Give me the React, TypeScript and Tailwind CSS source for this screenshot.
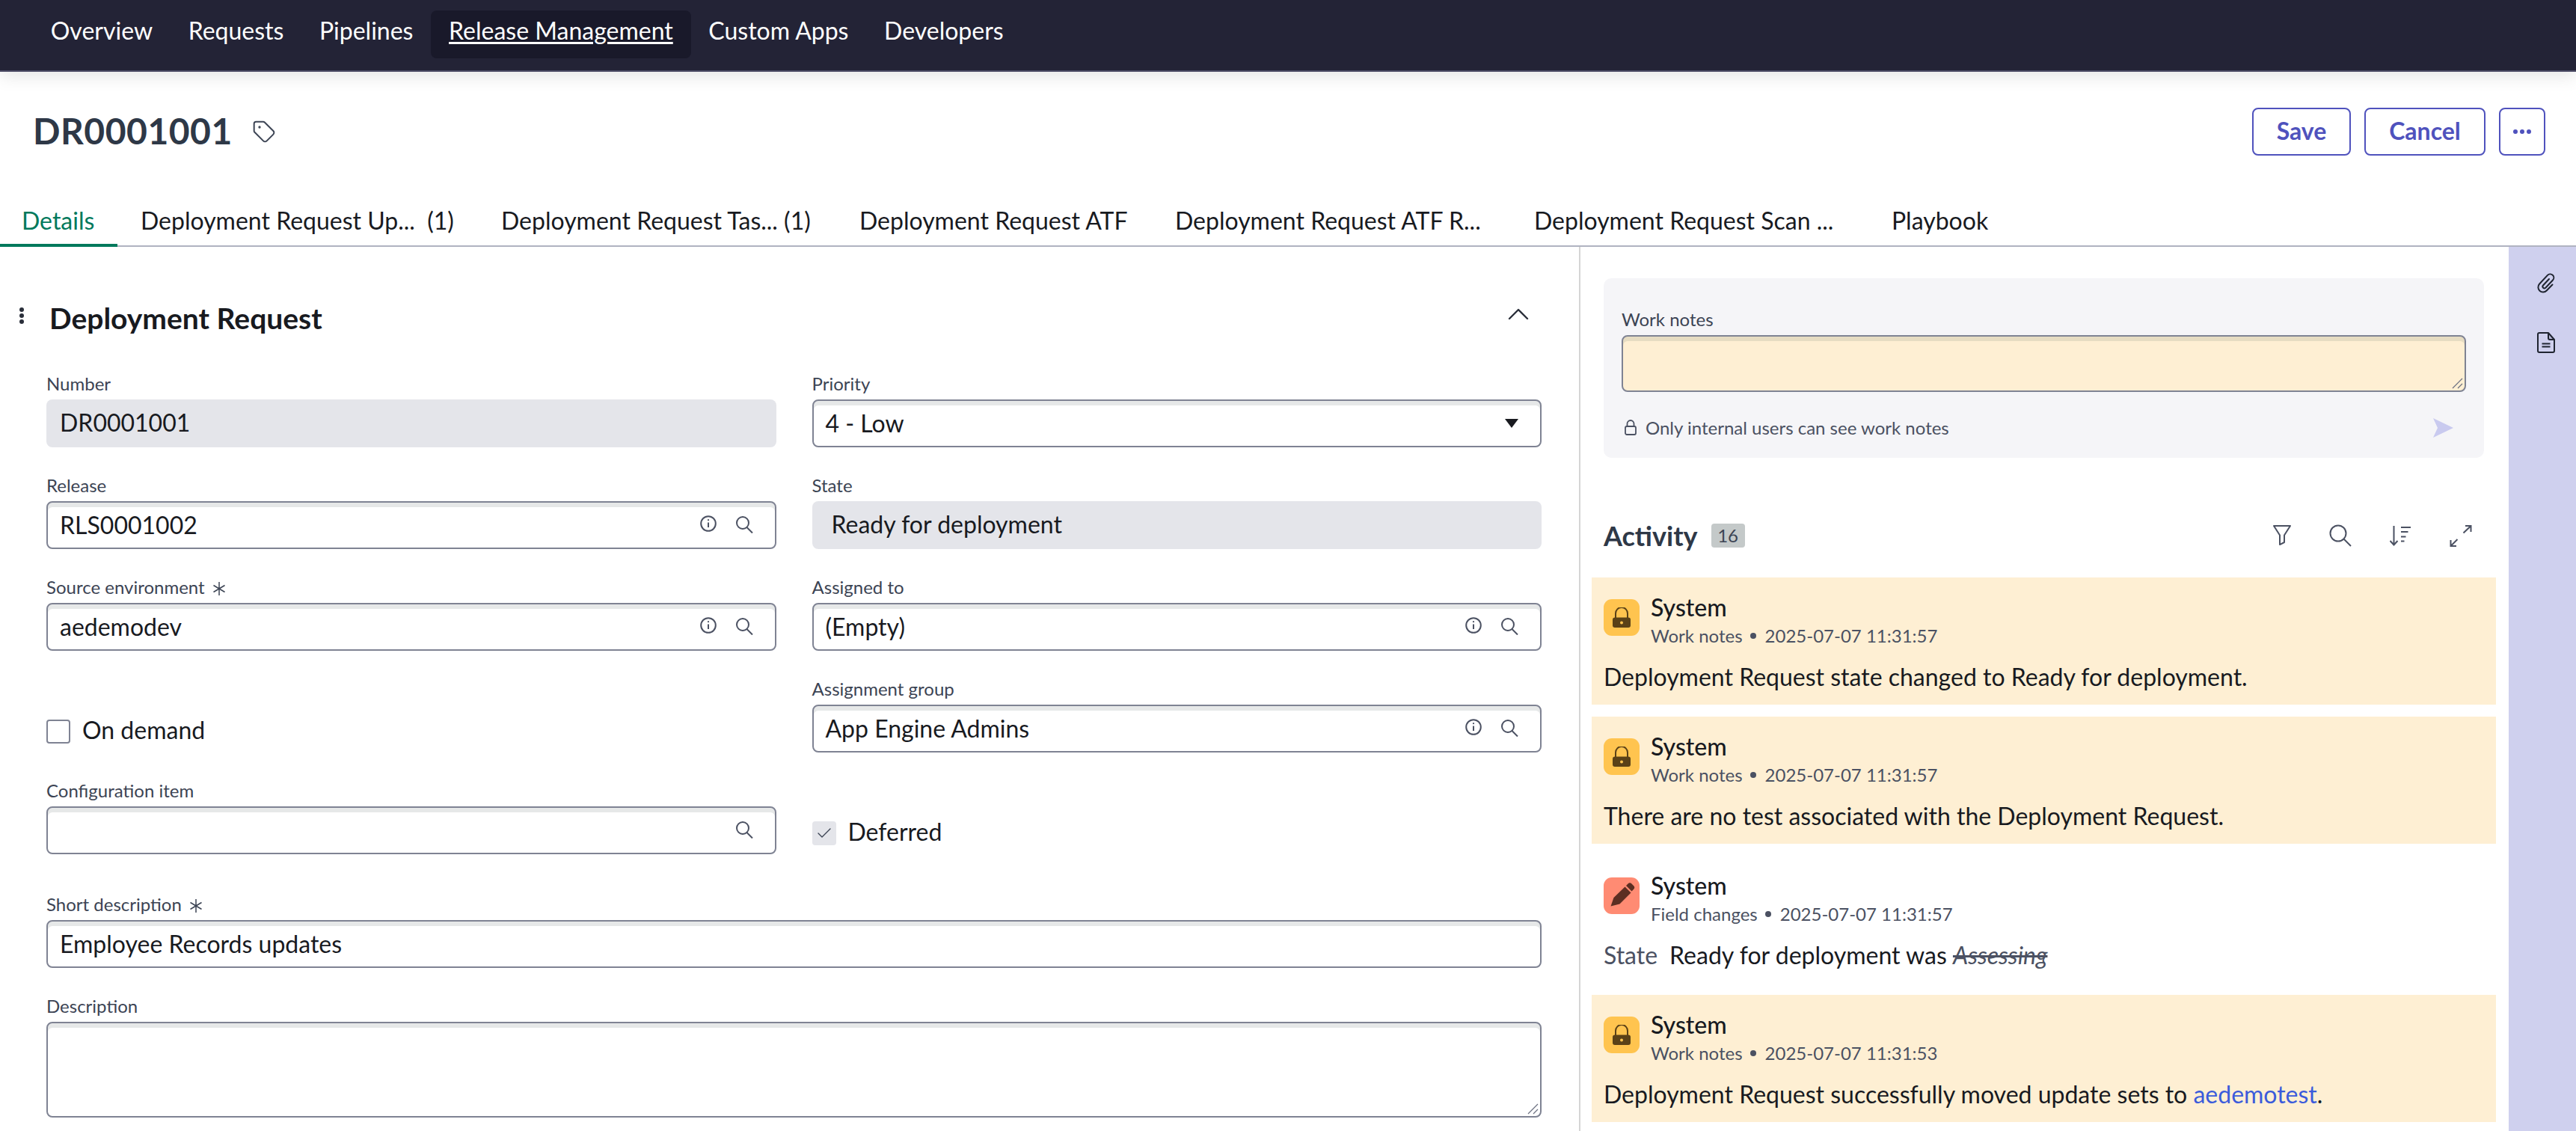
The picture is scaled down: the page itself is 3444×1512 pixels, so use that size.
import React from "react";
import { Tag, ChevronUp, Check } from "lucide-react";

const nav = ["Overview", "Requests", "Pipelines", "Release Management", "Custom Apps", "Developers"];

function Asterisk() {
  return (
    <svg viewBox="0 0 20 20" className="w-[20px] h-[20px] ml-[9px] inline-block align-[-3px]" fill="none" stroke="#3c4454" strokeWidth="1.5">
      <path d="M10 1v18M2.5 5.5l15 9M17.5 5.5l-15 9" />
    </svg>
  );
}

function Label({ children, req }: { children: React.ReactNode; req?: boolean }) {
  return (
    <div className="h-[36px] leading-[30px] text-[24px] text-[#3c4454]">
      {children}
      {req ? <Asterisk /> : null}
    </div>
  );
}

function InfoIcon() {
  return (
    <svg viewBox="0 0 22 22" className="w-[22px] h-[22px] -mt-[4px]" fill="none" stroke="#4b5162" strokeWidth="2">
      <circle cx="11" cy="11" r="9.8" />
      <path d="M11 9.5V16" />
      <circle cx="11" cy="6.2" r="1.1" fill="#4b5162" stroke="none" />
    </svg>
  );
}

function SearchIcon() {
  return (
    <svg viewBox="0 0 24 24" className="w-[24px] h-[24px] -mt-[2px]" fill="none" stroke="#4b5162" strokeWidth="2">
      <circle cx="10" cy="10" r="8" />
      <path d="M15.5 16L23 23.5" />
    </svg>
  );
}

function InputIcons({ info = true }: { info?: boolean }) {
  return (
    <div className="flex items-center gap-[25px]">
      {info ? <InfoIcon /> : null}
      <SearchIcon />
    </div>
  );
}

function Box({ children, className = "" }: { children?: React.ReactNode; className?: string }) {
  return (
    <div
      className={
        "h-[64px] flex items-center justify-between rounded-[8px] border-2 border-[#7f8393] bg-white shadow-[inset_0_6px_0_#e6e8e8] pl-[16px] pr-[29px] text-[32px] leading-[38px] text-[#181a1f] " +
        className
      }
    >
      {children}
    </div>
  );
}

function Field({ label, req, value, icons, info }: { label: string; req?: boolean; value?: string; icons?: boolean; info?: boolean }) {
  return (
    <div className="h-[136px]">
      <Label req={req}>{label}</Label>
      <Box>
        <span className="-mt-[1px]">{value}</span>
        {icons ? <InputIcons info={info} /> : null}
      </Box>
    </div>
  );
}

function ReadOnly({ label, value, indent }: { label: string; value: string; indent?: boolean }) {
  return (
    <div className="h-[136px]">
      <Label>{label}</Label>
      <div className={"h-[64px] pb-[2px] flex items-center rounded-[8px] bg-[#e4e5ea] text-[32px] text-[#181a1f] " + (indent ? "pl-[26px]" : "pl-[18px]")}>
        {value}
      </div>
    </div>
  );
}

function CheckRow({ label, checked, tall }: { label: string; checked?: boolean; tall?: boolean }) {
  return (
    <div className={"pt-[56px] flex items-start gap-[16px] " + (tall ? "h-[152px]" : "h-[136px]")}>
      {checked ? (
        <div className="w-[32px] h-[32px] rounded-[4px] bg-[#e4e5ea] flex items-center justify-center">
          <Check className="w-[24px] h-[24px] text-[#3c4454]" strokeWidth={1.4} />
        </div>
      ) : (
        <div className="w-[32px] h-[32px] rounded-[4px] border-2 border-[#7f8393] bg-white" />
      )}
      <span className="text-[32px] leading-[28px] text-[#181a1f]">{label}</span>
    </div>
  );
}

function Resize({ color = "#6b7080" }: { color?: string }) {
  return (
    <svg viewBox="0 0 16 16" className="absolute right-[2px] bottom-[2px] w-[16px] h-[16px]" fill="none" stroke={color} strokeWidth="1.2">
      <path d="M2 15L15 2M9 15l6-6" />
    </svg>
  );
}

function LockSolid() {
  return (
    <svg viewBox="0 0 24 27" className="w-[24px] h-[27px]">
      <path d="M4 14V8a8 8 0 0116 0v6" fill="none" stroke="#5a4117" strokeWidth="2" />
      <rect x="0" y="13.5" width="24" height="13.5" rx="3" fill="#5a4117" />
      <circle cx="12" cy="20.5" r="2" fill="#ffc44f" />
    </svg>
  );
}

function PencilSolid() {
  return (
    <svg viewBox="0 0 48 48" className="w-[48px] h-[48px]">
      <path d="M9.5 37.5L13.5 26L28.5 11.5L36.5 19.5L21.5 34.5Z" fill="#5c2e22" />
      <path d="M30 10l2.5-2.5a3.5 3.5 0 015 0l2.5 2.5a3.5 3.5 0 010 5L37.5 17.5Z" fill="#5c2e22" />
    </svg>
  );
}

function Meta({ kind, time }: { kind: string; time: string }) {
  return (
    <div className="mt-[4px] h-[32px] leading-[30px] text-[24px] text-[#4b5162] flex items-center">
      <span>{kind}</span>
      <span className="w-[8px] h-[8px] rounded-full bg-[#4b5162] ml-[10px] mr-[12px]" />
      <span>{time}</span>
    </div>
  );
}

function Item({ type, kind, time, children }: { type: "lock" | "edit"; kind: string; time: string; children: React.ReactNode }) {
  const lock = type === "lock";
  return (
    <div className={"h-[170px] -mx-[16px] px-[16px] pt-[26px] mb-[16px] " + (lock ? "bg-[#feefd3]" : "bg-white")}>
      <div className="flex gap-[15px]">
        <div className={"w-[48px] h-[49px] mt-[3px] rounded-[11px] flex items-center justify-center " + (lock ? "bg-[#ffc44f]" : "bg-[#ff8b73]")}>
          {lock ? <LockSolid /> : <PencilSolid />}
        </div>
        <div>
          <div className="h-[32px] leading-[28px] text-[32px] font-medium text-[#181a1f]">System</div>
          <Meta kind={kind} time={time} />
        </div>
      </div>
      <div className="mt-[20px] leading-[38px] text-[32px] text-[#181a1f]">{children}</div>
    </div>
  );
}

export default function App() {
  return (
    <div className="w-[3444px] h-[1512px] overflow-hidden flex flex-col bg-white font-[Lato,sans-serif]">
      <nav className="relative z-10 h-[96px] shrink-0 bg-[#232336] border-b-2 border-[#4d4c66] pl-[44px] pt-[14px] flex items-start shadow-[0_6px_22px_rgba(0,0,0,0.10)]">
        {nav.map((n) => {
          const active = n === "Release Management";
          return (
            <div key={n} className={"h-[64px] px-[23.8px] pt-[7px] rounded-[8px] text-[32px] leading-[40px] text-white " + (active ? "bg-[#19192a] underline underline-offset-[3px] decoration-[3px]" : "")}>
              {n}
            </div>
          );
        })}
      </nav>

      <header className="h-[166px] shrink-0 flex items-start justify-between pl-[44px] pr-[41px] pt-[48px]">
        <div className="h-[64px] flex items-center gap-[26px]">
          <h1 className="text-[48px] leading-[60px] tracking-[0.5px] font-bold -mt-[3px] text-[#2e3847]">DR0001001</h1>
          <Tag className="w-[32px] h-[32px] text-[#3c4454]" strokeWidth={1.5} />
        </div>
        <div className="flex gap-[18px]">
          <button className="h-[64px] w-[132px] pb-[2px] rounded-[8px] border-2 border-[#4f52bd] text-[32px] font-bold text-[#4f52bd]">Save</button>
          <button className="h-[64px] w-[162px] pb-[2px] rounded-[8px] border-2 border-[#4f52bd] text-[32px] font-bold text-[#4f52bd]">Cancel</button>
          <button className="h-[64px] w-[62px] rounded-[8px] border-2 border-[#4f52bd] flex items-center justify-center gap-[3px]">
            <span className="w-[6px] h-[6px] rounded-full bg-[#4f52bd]" />
            <span className="w-[6px] h-[6px] rounded-full bg-[#4f52bd]" />
            <span className="w-[6px] h-[6px] rounded-full bg-[#4f52bd]" />
          </button>
        </div>
      </header>

      <div className="h-[68px] shrink-0 flex items-start border-b-2 border-[#b0b3c1] text-[32px] leading-[40px] text-[#181a1f]">
        <div className="relative h-[68px] w-[157px] pl-[29px] pt-[13px] text-[#00795c] border-b-4 border-[#00795c]">Details</div>
        <div className="pt-[13px] pl-[31px] w-[482px] whitespace-pre">Deployment Request Up...  (1)</div>
        <div className="pt-[13px] pl-[31px] w-[479px] whitespace-pre">Deployment Request Tas... (1)</div>
        <div className="pt-[13px] pl-[31px] w-[422px]">Deployment Request ATF</div>
        <div className="pt-[13px] pl-[31px] w-[480px]">Deployment Request ATF R...</div>
        <div className="pt-[13px] pl-[31px] w-[509px]">Deployment Request Scan ...</div>
        <div className="pt-[13px]">Playbook</div>
      </div>

      <main className="flex-1 flex min-h-0">
        <section className="w-[2113px] shrink-0 border-r-2 border-[#d5d5d5] pl-[26px] pr-[50px]">
          <div className="h-[168px] pt-[24px] flex items-center justify-between">
            <div className="flex items-center">
              <div className="w-[7px] flex flex-col gap-[2px] -mt-[8px]">
                <span className="w-[6px] h-[6px] rounded-full bg-[#2a2f3a]" />
                <span className="w-[6px] h-[6px] rounded-full bg-[#2a2f3a]" />
                <span className="w-[6px] h-[6px] rounded-full bg-[#2a2f3a]" />
              </div>
              <h2 className="ml-[33px] -mt-[3px] text-[39px] leading-[48px] font-bold text-[#181a1f]">Deployment Request</h2>
            </div>
            <ChevronUp className="w-[48px] h-[48px] mr-[7px] -mt-[12px] text-[#2a2f3a]" strokeWidth={1.2} />
          </div>

          <div className="pl-[36px]">
            <div className="grid grid-cols-2 gap-x-[48px]">
              <div>
                <ReadOnly label="Number" value="DR0001001" />
                <Field label="Release" value="RLS0001002" icons />
                <Field label="Source environment" req value="aedemodev" icons />
                <CheckRow label="On demand" />
                <div className="h-[152px]">
                  <Label>Configuration item</Label>
                  <Box>
                    <span />
                    <InputIcons info={false} />
                  </Box>
                </div>
              </div>
              <div>
                <div className="h-[136px]">
                  <Label>Priority</Label>
                  <Box className="pr-[24px]">
                    <span className="-mt-[1px]">4 - Low</span>
                    <svg viewBox="0 0 18 12" className="w-[18px] h-[12px]"><path d="M0 0h18L9 12z" fill="#181a1f" /></svg>
                  </Box>
                </div>
                <ReadOnly label="State" value="Ready for deployment" indent />
                <Field label="Assigned to" value="(Empty)" icons />
                <Field label="Assignment group" value="App Engine Admins" icons />
                <CheckRow label="Deferred" checked tall />
              </div>
            </div>
            <Field label="Short description" req value="Employee Records updates" />
            <Label>Description</Label>
            <div className="relative h-[128px] rounded-[8px] border-2 border-[#7f8393] bg-white shadow-[inset_0_6px_0_#e6e8e8]">
              <Resize />
            </div>
          </div>
        </section>

        <section className="flex-1 min-w-0 pl-[31px] pr-[33px] pt-[42px]">
          <div className="h-[240px] rounded-[10px] bg-[#f5f5f8] px-[24px] pt-[40px]">
            <Label>Work notes</Label>
            <div className="relative h-[76px] rounded-[8px] border-2 border-[#7f8393] bg-[#feefd3] shadow-[inset_0_6px_0_#e6dcc2]">
              <Resize />
            </div>
            <div className="mt-[28px] flex items-center justify-between h-[40px]">
              <div className="flex items-center gap-[12px] pl-[4px] text-[24px] text-[#4b5162]">
                <svg viewBox="0 0 16 24" className="w-[16px] h-[24px]" fill="none" stroke="#4b5162" strokeWidth="1.8">
                  <path d="M3.5 10V6.5a4.5 4.5 0 019 0V10" />
                  <rect x="1" y="10" width="14" height="11" rx="2" />
                </svg>
                Only internal users can see work notes
              </div>
              <svg viewBox="0 0 27 26" className="w-[27px] h-[26px] mr-[17px]">
                <path d="M0 0l27 13H6zM6 13h21L0 26z" fill="#c9caef" />
              </svg>
            </div>
          </div>

          <div className="h-[160px] pt-[47px] flex items-center justify-between pr-[16px]">
            <div className="flex items-center gap-[18px]">
              <h3 className="text-[36px] leading-[50px] font-bold text-[#2e3847]">Activity</h3>
              <span className="w-[45px] h-[32px] rounded-[4px] bg-[#c4c9c9] text-[24px] leading-[32px] text-center text-[#3c4454]">16</span>
            </div>
            <div className="flex items-center gap-[51px] text-[#4b5162]">
              <svg viewBox="0 0 24 27" className="w-[24px] h-[27px]" fill="none" stroke="currentColor" strokeWidth="2" strokeLinejoin="round">
                <path d="M1 1h22l-8 12.5V23l-6 3V13.5z" />
              </svg>
              <svg viewBox="0 0 30 30" className="w-[30px] h-[30px]" fill="none" stroke="currentColor" strokeWidth="2">
                <circle cx="12" cy="12" r="10.5" />
                <path d="M19.5 19.5L29 29" />
              </svg>
              <svg viewBox="0 0 29 28" className="w-[29px] h-[28px]" fill="none" stroke="currentColor" strokeWidth="2">
                <path d="M5.5 1v25M0.5 21l5 5.5 5-5.5M15 3h13M15 9h9.5M15 15.5h6.5M15 21.5h4.5" />
              </svg>
              <svg viewBox="0 0 30 30" className="w-[30px] h-[30px]" fill="none" stroke="currentColor" strokeWidth="2">
                <path d="M21 2h7.5v8M28.5 2L18.5 11.5M1.5 21v8H9M1.5 29L10.5 20" />
              </svg>
            </div>
          </div>

          <Item type="lock" kind="Work notes" time="2025-07-07 11:31:57">Deployment Request state changed to Ready for deployment.</Item>
          <Item type="lock" kind="Work notes" time="2025-07-07 11:31:57">There are no test associated with the Deployment Request.</Item>
          <Item type="edit" kind="Field changes" time="2025-07-07 11:31:57">
            <span className="text-[#4b5162] mr-[16px]">State</span>
            Ready for deployment was <span className="italic line-through text-[#4b5162]">Assessing</span>
          </Item>
          <Item type="lock" kind="Work notes" time="2025-07-07 11:31:53">
            Deployment Request successfully moved update sets to <span className="text-[#3b5bdb]">aedemotest</span>.
          </Item>
        </section>

        <aside className="w-[90px] shrink-0 bg-[#cfd0ee] flex flex-col items-center pl-[10px] pt-[34px] gap-[52px] text-[#1f2430]">
          <svg viewBox="0 0 24 28" className="w-[24px] h-[28px]" fill="none" stroke="currentColor" strokeWidth="2" strokeLinecap="round">
            <path d="M16 9L8 17.5a2.3 2.3 0 003.3 3.2L21 10.5a4.8 4.8 0 00-7-6.6L3.2 15.5a6.5 6.5 0 009.5 9l7.8-8" />
          </svg>
          <svg viewBox="0 0 24 28" className="w-[24px] h-[28px]" fill="none" stroke="currentColor" strokeWidth="2" strokeLinejoin="round">
            <path d="M3 1h12l8 9v15a2 2 0 01-2 2H3a2 2 0 01-2-2V3a2 2 0 012-2z" />
            <path d="M15 1v7a2 2 0 002 2h6" fill="currentColor" fillOpacity="0.12" />
            <path d="M6.5 15.5h11M6.5 19.5h11" />
          </svg>
        </aside>
      </main>
    </div>
  );
}
